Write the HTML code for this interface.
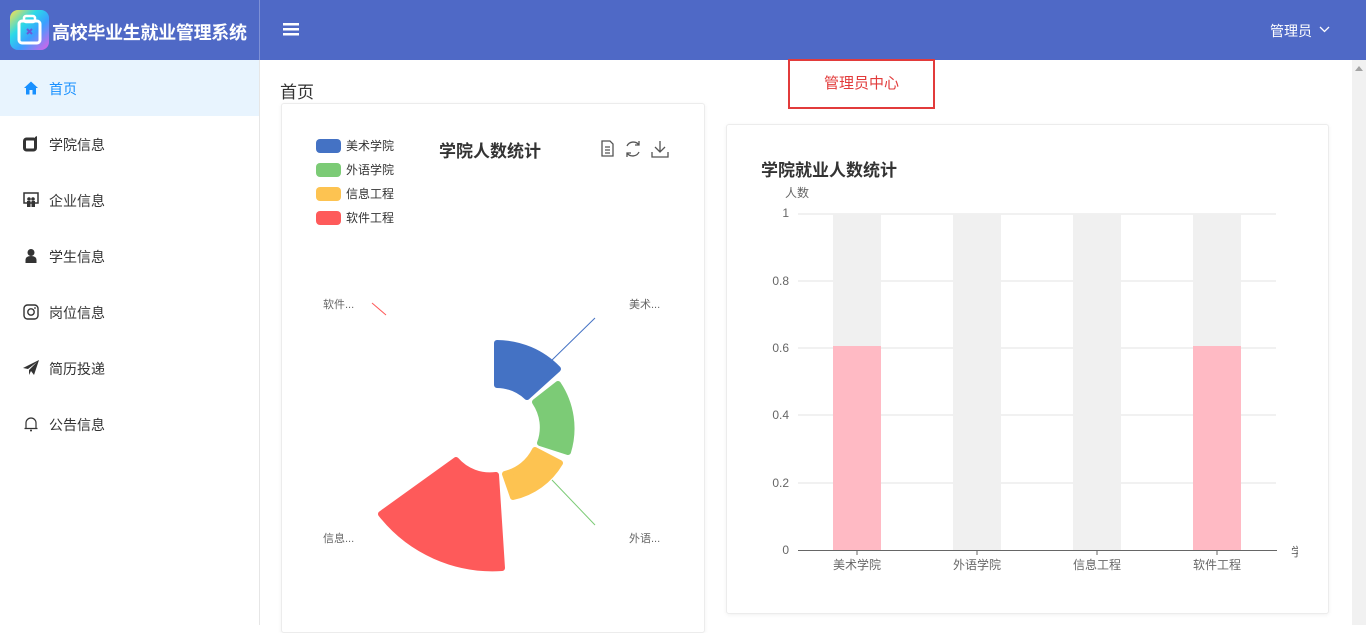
<!DOCTYPE html>
<html><head><meta charset="utf-8"><style>
*{margin:0;padding:0;box-sizing:border-box}
body{width:1366px;height:625px;overflow:hidden;background:#fff;font-family:"Liberation Sans","Noto Sans CJK SC",sans-serif;position:relative}
.hdr{position:absolute;left:0;top:0;width:1366px;height:60px;background:#4f69c6}
.logo{position:absolute;left:10px;top:10px;width:39px;height:40px;border-radius:8px;background:linear-gradient(135deg,#ffe14a 0%,#2bd9e8 35%,#3aa0ff 60%,#e25ee8 100%)}
.title{position:absolute;left:52px;top:19px;color:#fff;font-size:18px;font-weight:bold;letter-spacing:-0.3px}
.sep{position:absolute;left:259px;top:0;width:1px;height:60px;background:#7d90d6}
.side{position:absolute;left:0;top:60px;width:260px;height:565px;background:#fff;border-right:1px solid #e6e6e6}
.item{position:absolute;left:0;width:259px;height:56px;font-size:14px;color:#333}
.item span{position:absolute;left:49px;top:19px}
.item svg{position:absolute;left:23px;top:20px}
.act{background:#e8f4fe;color:#1890ff}
.card{position:absolute;background:#fff;border:1px solid #ececec;border-radius:3px;box-shadow:0 1px 4px rgba(0,0,0,.06)}
.t{position:absolute;font-size:12px;color:#666;white-space:nowrap}
</style></head><body>
<div class="hdr">
 <div class="logo"><svg width="39" height="40" viewBox="0 0 39 40"><rect x="9" y="11" width="21" height="22" rx="3" fill="none" stroke="#fff" stroke-width="3"/><rect x="14" y="6" width="11" height="6" rx="2" fill="none" stroke="#fff" stroke-width="2.5"/><path d="M17 19l5 5M22 19l-5 5" stroke="#6a5ad8" stroke-width="2"/></svg></div>
 <div class="title">高校毕业生就业管理系统</div>
 <div class="sep"></div>
 <svg style="position:absolute;left:283px;top:23px" width="16" height="13"><rect y="0" width="16" height="2.5" fill="#fff"/><rect y="5" width="16" height="2.5" fill="#fff"/><rect y="10" width="16" height="2.5" fill="#fff"/></svg>
 <div style="position:absolute;left:1270px;top:21px;color:#fff;font-size:14px">管理员</div>
 <svg style="position:absolute;left:1319px;top:26px" width="11" height="7"><path d="M1 1l4.5 4.5L10 1" stroke="#fff" stroke-width="1.3" fill="none"/></svg>
</div>
<div class="side">
 <div class="item act" style="top:0"><svg width="16" height="16" viewBox="0 0 16 16"><path d="M1 8L8 1.5 15 8h-2v6.5H9.5V10h-3v4.5H3V8z" fill="#1890ff"/></svg><span>首页</span></div>
 <div class="item" style="top:56px"><svg width="16" height="16" viewBox="0 0 16 16"><rect x="1.5" y="3" width="11" height="11" rx="2" fill="none" stroke="#333" stroke-width="3"/><path d="M12 1l2-1v5h-2z" fill="#333"/></svg><span>学院信息</span></div>
 <div class="item" style="top:112px"><svg width="16" height="16" viewBox="0 0 16 16"><rect x="1" y="1" width="14" height="10" fill="none" stroke="#333" stroke-width="1.5"/><circle cx="6" cy="7" r="1.8" fill="#333"/><circle cx="10" cy="7" r="1.8" fill="#333"/><rect x="4" y="9" width="3.5" height="6" fill="#333"/><rect x="8.5" y="9" width="3.5" height="6" fill="#333"/></svg><span>企业信息</span></div>
 <div class="item" style="top:168px"><svg width="16" height="16" viewBox="0 0 16 16"><circle cx="8" cy="4.5" r="3.5" fill="#333"/><path d="M2.5 15v-3c0-2.5 2-4 5.5-4s5.5 1.5 5.5 4v3z" fill="#333"/></svg><span>学生信息</span></div>
 <div class="item" style="top:224px"><svg width="16" height="16" viewBox="0 0 16 16"><rect x="1" y="1" width="14" height="14" rx="3.5" fill="none" stroke="#333" stroke-width="1.4"/><circle cx="8" cy="8" r="3.2" fill="none" stroke="#333" stroke-width="1.4"/><circle cx="12" cy="4" r=".9" fill="#333"/></svg><span>岗位信息</span></div>
 <div class="item" style="top:280px"><svg width="17" height="16" viewBox="0 0 17 16"><path d="M0 8L16 0 11 15 8 11 6 15 6 10 14 2 5 9z" fill="#333"/></svg><span>简历投递</span></div>
 <div class="item" style="top:336px"><svg width="16" height="16" viewBox="0 0 16 16"><path d="M3 12V7a5 5 0 0110 0v5M1.5 12.5h13" fill="none" stroke="#333" stroke-width="1.2"/><circle cx="8" cy="14.5" r="1" fill="#333"/></svg><span>公告信息</span></div>
</div>
<div style="position:absolute;left:280px;top:78px;font-size:17px;color:#333">首页</div>
<div style="position:absolute;left:788px;top:59px;width:147px;height:50px;border:2px solid #e23b3b;color:#e23b3b;font-size:15px;text-align:center;line-height:46px">管理员中心</div>
<div style="position:absolute;left:1352px;top:60px;width:14px;height:565px;background:#f1f1f1"><svg style="position:absolute;left:3px;top:5px" width="8" height="6"><path d="M0 6L4 1 8 6z" fill="#a3a3a3"/></svg></div>

<div class="card" style="left:281px;top:103px;width:424px;height:530px"></div>
<svg style="position:absolute;left:0;top:0" width="1366" height="625">
 <rect x="316" y="139" width="25" height="14" rx="4" fill="#4472c4"/>
 <rect x="316" y="163" width="25" height="14" rx="4" fill="#7ccb76"/>
 <rect x="316" y="187" width="25" height="14" rx="4" fill="#fdc351"/>
 <rect x="316" y="211" width="25" height="14" rx="4" fill="#fe5a5a"/>
 <g stroke-linejoin="round" stroke-width="6">
 <path d="M497 343A85 85 0 0 1 558 369L527 397A45 45 0 0 0 497 385Z" fill="#4472c4" stroke="#4472c4"/>
 <path d="M558 384A80 80 0 0 1 568 452L540 443A45 45 0 0 0 535 402Z" fill="#7ccb76" stroke="#7ccb76"/>
 <path d="M560 463A72 72 0 0 1 513 497L505 474A45 45 0 0 0 535 450Z" fill="#fdc351" stroke="#fdc351"/>
 <path d="M502 568A142 142 0 0 1 381 514L456 460A45 45 0 0 0 496 475Z" fill="#fe5a5a" stroke="#fe5a5a"/>
 </g>
 <path d="M550 362L595 318" stroke="#4472c4"/>
 <path d="M552 480L595 525" stroke="#7ccb76"/>
 <path d="M372 303L386 315" stroke="#fe5a5a"/>
 <g fill="none" stroke="#555" stroke-width="1.3">
  <path d="M602 141h8l3 3v12h-11zM605 147h5M605 150h5M605 153h5"/>
  <path d="M627 146a7 7 0 0 1 12-1M639 152a7 7 0 0 1-12 1M639 141v4h-4M627 157v-4h4"/>
  <path d="M660 141v11M655 147l5 5 5-5M652 152v5h16v-5"/>
 </g>
 <g stroke="#e3e3e3"><path d="M798 214H1276M798 281H1276M798 348H1276M798 415H1276M798 483H1276"/></g>
 <g fill="#f0f0f0"><rect x="833" y="214" width="48" height="336"/><rect x="953" y="214" width="48" height="336"/><rect x="1073" y="214" width="48" height="336"/><rect x="1193" y="214" width="48" height="336"/></g>
 <rect x="833" y="346" width="48" height="204" fill="#ffbac4"/><rect x="1193" y="346" width="48" height="204" fill="#ffbac4"/>
 <path d="M798 550.5H1277M857 550v5M977 550v5M1097 550v5M1217 550v5" stroke="#666"/>
</svg>
<div class="t" style="left:346px;top:137px;color:#333">美术学院</div>
<div class="t" style="left:346px;top:161px;color:#333">外语学院</div>
<div class="t" style="left:346px;top:185px;color:#333">信息工程</div>
<div class="t" style="left:346px;top:209px;color:#333">软件工程</div>
<div style="position:absolute;left:439px;top:137px;font-size:17px;font-weight:bold;color:#333">学院人数统计</div>
<div class="t" style="left:323px;top:296px;font-size:11px">软件...</div>
<div class="t" style="left:629px;top:296px;font-size:11px">美术...</div>
<div class="t" style="left:323px;top:530px;font-size:11px">信息...</div>
<div class="t" style="left:629px;top:530px;font-size:11px">外语...</div>

<div class="card" style="left:726px;top:124px;width:603px;height:490px;z-index:-1"></div>
<div style="position:absolute;left:761px;top:156px;font-size:17px;font-weight:bold;color:#333">学院就业人数统计</div>
<div class="t" style="left:785px;top:184px">人数</div>
<div class="t" style="left:760px;top:206px;width:29px;text-align:right">1</div>
<div class="t" style="left:760px;top:274px;width:29px;text-align:right">0.8</div>
<div class="t" style="left:760px;top:341px;width:29px;text-align:right">0.6</div>
<div class="t" style="left:760px;top:408px;width:29px;text-align:right">0.4</div>
<div class="t" style="left:760px;top:476px;width:29px;text-align:right">0.2</div>
<div class="t" style="left:760px;top:543px;width:29px;text-align:right">0</div>
<div class="t" style="left:833px;top:556px">美术学院</div>
<div class="t" style="left:953px;top:556px">外语学院</div>
<div class="t" style="left:1073px;top:556px">信息工程</div>
<div class="t" style="left:1193px;top:556px">软件工程</div>
<div class="t" style="left:1291px;top:543px;width:7px;overflow:hidden">学</div>
</body></html>
